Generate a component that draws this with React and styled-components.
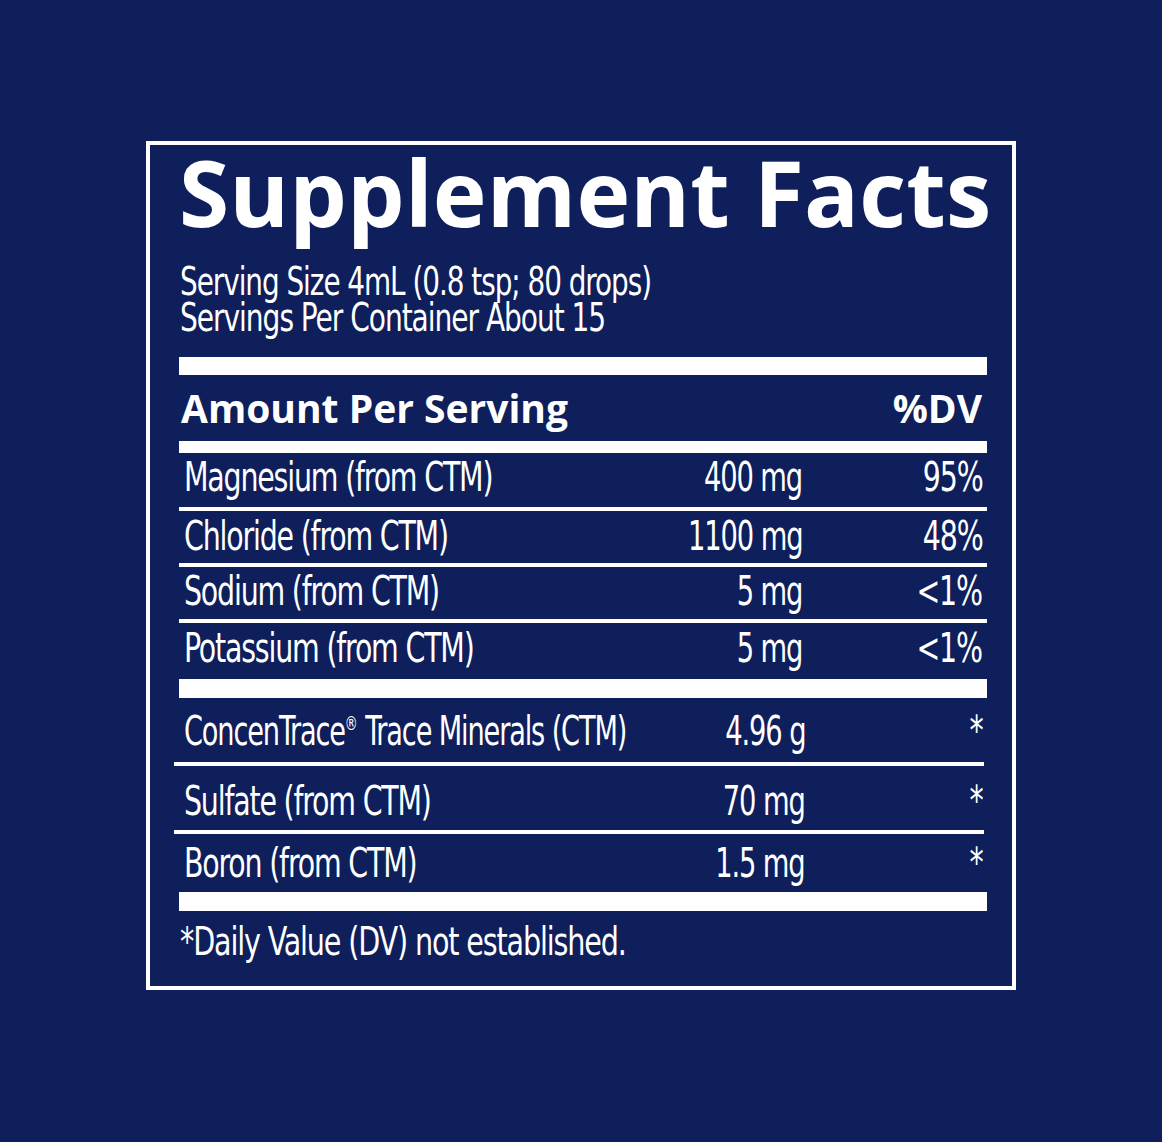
import React from "react";
import styled, { createGlobalStyle } from "styled-components";

const navy = "#0e1f5c";
const cond = `"DejaVu Sans Condensed", "DejaVu Sans", "Liberation Sans", sans-serif`;
const bold = `"Open Sans", "Liberation Sans", sans-serif`;

const GlobalStyle = createGlobalStyle`
  html, body {
    margin: 0;
    padding: 0;
    background: ${navy};
  }
  body {
    color: #fff;
    font-family: ${cond};
  }
`;

const Page = styled.div`
  min-height: 1142px;
  padding-top: 141px;
  box-sizing: border-box;
  background: ${navy};
`;

const Label = styled.div`
  width: 870px;
  height: 849px;
  margin: 0 auto;
  box-sizing: border-box;
  border: 4px solid #fff;
  padding: 2px 25px 0 29px;
  display: flex;
  flex-direction: column;
`;

const Title = styled.h1`
  margin: 0;
  font-family: ${bold};
  font-weight: 700;
  font-size: 91px;
  line-height: 91px;
  letter-spacing: 0.2px;
  white-space: nowrap;
`;

// condensed text: the installed fonts are too wide, so squeeze horizontally
const Squeeze = styled.span`
  display: ${(p) => (p.$block ? "block" : "inline-block")};
  white-space: nowrap;
  transform: scaleX(${(p) => p.$sx || 0.79});
  transform-origin: ${(p) => (p.$right ? "right" : "left")} center;
`;

const Serving = styled.div`
  margin-top: 26px;
  font-size: 39px;
  line-height: 36px;
  letter-spacing: -1.3px;
  padding-left: 1px;
`;

const Bar = styled.div`
  height: ${(p) => p.$h}px;
  margin-top: ${(p) => p.$mt || 0}px;
  background: #fff;
`;

const Header = styled.div`
  margin-top: 13px;
  display: flex;
  justify-content: space-between;
  padding: 0 5px 0 2px;
  font-family: ${bold};
  font-weight: 700;
  font-size: 39px;
  line-height: 40px;
  letter-spacing: 0;
`;

const Group = styled.div`
  display: flex;
  flex-direction: column;
  margin: ${(p) => (p.$shift ? "0 3px 0 -5px" : "0")};
`;

const Row = styled.div`
  display: grid;
  grid-template-columns: minmax(0, 1fr) 200px ${(p) => (p.$shift ? 177 : 180)}px;
  height: ${(p) => p.$h}px;
  box-sizing: border-box;
  padding: ${(p) => p.$pt}px ${(p) => (p.$shift ? 2 : 5)}px 0
    ${(p) => (p.$shift ? 10 : 5)}px;
  border-bottom: ${(p) => (p.$last ? "none" : "4px solid #fff")};
  font-size: 40px;
  line-height: 41px;
  letter-spacing: -1.5px;
  white-space: nowrap;
`;

const Cell = styled.div`
  display: flex;
  justify-content: ${(p) => (p.$right ? "flex-end" : "flex-start")};
  min-width: 0;
`;

const Reg = styled.sup`
  font-size: 19px;
  line-height: 0;
  vertical-align: 15px;
  letter-spacing: 0;
`;

const Footnote = styled.div`
  margin-top: 11px;
  font-size: 39px;
  line-height: 40px;
  letter-spacing: -1.4px;
  padding-left: 1px;
`;

const minerals = [
  { name: "Magnesium (from CTM)", amount: "400 mg", dv: "95%", h: 58, pt: 4 },
  { name: "Chloride (from CTM)", amount: "1100 mg", dv: "48%", h: 56, pt: 5 },
  { name: "Sodium (from CTM)", amount: "5 mg", dv: "<1%", h: 56, pt: 4 },
  { name: "Potassium (from CTM)", amount: "5 mg", dv: "<1%", h: 56, pt: 5 },
];

const trace = [
  {
    name: (
      <>
        ConcenTrace<Reg>®</Reg> Trace Minerals (CTM)
      </>
    ),
    sx: 0.755,
    amount: "4.96 g",
    dv: "*",
    h: 68,
    pt: 13,
  },
  { name: "Sulfate (from CTM)", amount: "70 mg", dv: "*", h: 68, pt: 15 },
  { name: "Boron (from CTM)", amount: "1.5 mg", dv: "*", h: 58, pt: 9 },
];

function FactRow({ item, last, shift }) {
  return (
    <Row $h={item.h} $pt={item.pt} $last={last} $shift={shift}>
      <Cell>
        <Squeeze $sx={item.sx}>{item.name}</Squeeze>
      </Cell>
      <Cell $right>
        <Squeeze $right $sx={0.76}>
          {item.amount}
        </Squeeze>
      </Cell>
      <Cell $right>
        <Squeeze $right>{item.dv}</Squeeze>
      </Cell>
    </Row>
  );
}

export default function App() {
  return (
    <Page>
      <GlobalStyle />
      <Label>
        <Title>Supplement Facts</Title>
        <Serving>
          <Squeeze $block $sx={0.794}>
            Serving Size 4mL (0.8 tsp; 80 drops)
          </Squeeze>
          <Squeeze $block $sx={0.8}>
            Servings Per Container About 15
          </Squeeze>
        </Serving>
        <Bar $h={18} $mt={21} />
        <Header>
          <span>Amount Per Serving</span>
          <span>%DV</span>
        </Header>
        <Bar $h={12} $mt={13} />
        <Group>
          {minerals.map((m, i) => (
            <FactRow key={i} item={m} last={i === minerals.length - 1} />
          ))}
        </Group>
        <Bar $h={19} />
        <Group $shift>
          {trace.map((m, i) => (
            <FactRow key={i} item={m} shift last={i === trace.length - 1} />
          ))}
        </Group>
        <Bar $h={19} />
        <Footnote>
          <Squeeze $block $sx={0.815}>
            *Daily Value (DV) not established.
          </Squeeze>
        </Footnote>
      </Label>
    </Page>
  );
}
